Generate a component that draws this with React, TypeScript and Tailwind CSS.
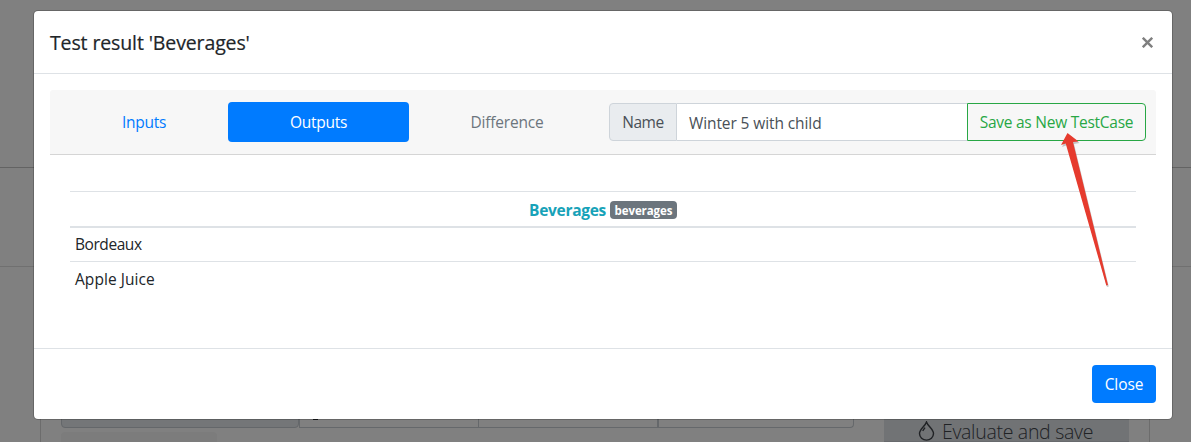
import React from "react";

const results = [
  { name: "Bordeaux", spacing: "tracking-[-0.44px]" },
  { name: "Apple Juice", spacing: "tracking-[0.05px]" },
];

function PageBehind() {
  return (
    <div className="flex h-[442px] flex-col bg-[#808080]">
      <div className="h-[167px] shrink-0" />
      <div className="h-[99px] shrink-0 border-t border-[#636363]" />
      <div className="flex flex-1 border-t border-[#707070] pl-10 pr-[41px]">
        <div className="flex flex-1 items-start border-x border-[#6c6c6c] pl-5">
          <div className="flex w-[793px] flex-col">
            <div className="flex h-[161px]">
              <div className="w-[238px] rounded-b border border-[#64676a] bg-[#747678]" />
              <div className="flex w-[179px] items-end border-b border-l border-[#65686b] pb-[7px] pl-[13px]">
                <span className="h-1 w-[5px] bg-[#15171a]" />
              </div>
              <div className="w-[179px] border-b border-l border-[#65686b]" />
              <div className="w-[197px] rounded-br border-b border-l-2 border-r border-[#65686b]" />
            </div>
            <div className="mt-1 h-[10px] w-[156px] rounded-t bg-[#7c7c7c]" />
          </div>
          <div className="ml-[30px] flex h-[175px] w-[245px] items-end justify-center border-b border-[#686a6d] bg-[#717375]">
            <div className="flex h-[20px] items-center gap-[7px] pr-[2px] text-[#202225]">
              <svg className="h-[20px] w-[17px]" viewBox="0 0 17 20" fill="none" stroke="currentColor" strokeWidth="1.4">
                <path d="M8.500 1C7.200 5.200 1.500 8.200 1.500 12.600a7 6.500 0 0 0 14 0C15.500 8.200 9.800 5.200 8.500 1Z" />
                <path d="M4.700 9.800 7 6.700" />
              </svg>
              <span className="whitespace-nowrap pt-px text-[19.5px] font-light leading-[20px] tracking-[-0.3px]">
                Evaluate and save
              </span>
            </div>
          </div>
        </div>
      </div>
    </div>
  );
}

function TabBar() {
  return (
    <div className="flex h-[65px] items-center rounded-t-[3px] border-b border-[#d5d5d5] bg-[#f7f7f7] px-[10px]">
      <div className="flex h-10 w-[545px] shrink-0 text-center leading-[41px]">
        <button className="w-[168px] text-[#007bff]"><span className="tracking-[-0.3px]">Inputs</span></button>
        <button className="w-[181px] rounded bg-[#007bff] text-white"><span className="tracking-[-0.25px]">Outputs</span></button>
        <button className="w-[196px] text-[#6c757d]"><span className="tracking-[-0.2px]">Difference</span></button>
      </div>
      <div className="ml-1 flex h-[38px] flex-1 leading-[37px]">
        <label className="w-[68px] rounded-l border border-[#ced4da] bg-[#e9ecef] text-center text-[#495057]"><span className="tracking-[-0.4px]">Name</span></label>
        <div className="flex-1 border-y border-[#ced4da] bg-white pl-3 leading-[39px] text-[#495057]">
          <span className="tracking-[-0.1px]">Winter 5 with child</span>
        </div>
        <button className="w-[179px] whitespace-nowrap rounded-r border border-[#28a745] text-[#28a745]">
          <span className="tracking-[-0.25px]">Save as New TestCase</span>
        </button>
      </div>
    </div>
  );
}

function PointerArrow() {
  return (
    <svg className="pointer-events-none absolute left-[1055px] top-[128px] h-[165px] w-[60px]" viewBox="1055 128 60 165">
      <path d="M1067.500 133 1061 145.500 1066.500 143.500 1106 285.500 1107.800 285 1073 142.500 1078.500 141.500Z" fill="#777" opacity="0.4" transform="translate(1 1.5)" />
      <path d="M1067.500 133 1061 145 1065.700 143.500 1106.300 285.500 1108 285 1073 142 1078.500 141.500Z" fill="#e63b2e" />
    </svg>
  );
}

export default function App() {
  return (
    <main className="relative h-[442px] w-[1191px] overflow-hidden font-['Open_Sans',sans-serif] text-[15.5px] text-[#212529]">
      <PageBehind />
      <section className="absolute left-[33px] top-[10px] flex h-[410px] w-[1140px] flex-col rounded-[5px] border border-black/20 bg-white bg-clip-padding">
        <header className="flex h-[63px] items-center justify-between border-b border-[#dee2e6] px-4">
          <h5 className="pt-[2px] text-[19.5px] font-medium [-webkit-text-stroke:0.2px_#212529]"><span className="tracking-[-0.12px]">Test result 'Beverages'</span></h5>
          <button aria-label="Close dialog" className="mr-[3px] text-[#7f7f7f]">
            <svg className="h-[11px] w-[11px]" viewBox="0 0 11 11" fill="none" stroke="currentColor" strokeWidth="2.4">
              <path d="m.8.8 9.400 9.400m0-9.400-9.400 9.400" />
            </svg>
          </button>
        </header>
        <div className="flex-1 p-4">
          <TabBar />
          <div className="px-5 pt-9">
            <table className="w-full border-separate border-spacing-0">
              <thead>
                <tr>
                  <th className="h-[37px] border-b-2 border-t border-[#dee2e6] p-0">
                    <div className="flex items-center justify-center gap-1 leading-5">
                      <span className="pt-px tracking-[-0.3px] text-[#17a2b8]">Beverages</span>
                      <span className="mt-px h-[18px] w-[67px] rounded bg-[#6c757d] text-center text-[11.500px] leading-[19px] tracking-[-0.1px] text-white">beverages</span>
                    </div>
                  </th>
                </tr>
              </thead>
              <tbody>
                {results.map(({ name, spacing }, index) => (
                  <tr key={name}>
                    <td className={index === 0 ? "h-[33px] px-[5px] pb-0 pt-px" : "h-[35px] border-t border-[#dee2e6] px-[5px] pb-0 pt-px"}>
                      <span className={spacing}>{name}</span>
                    </td>
                  </tr>
                ))}
              </tbody>
            </table>
          </div>
        </div>
        <footer className="flex h-[71px] items-center justify-end border-t border-[#dee2e6] px-4">
          <button className="h-[38px] w-16 rounded bg-[#007bff] leading-[39px] tracking-[-0.1px] text-white">Close</button>
        </footer>
      </section>
      <PointerArrow />
    </main>
  );
}
